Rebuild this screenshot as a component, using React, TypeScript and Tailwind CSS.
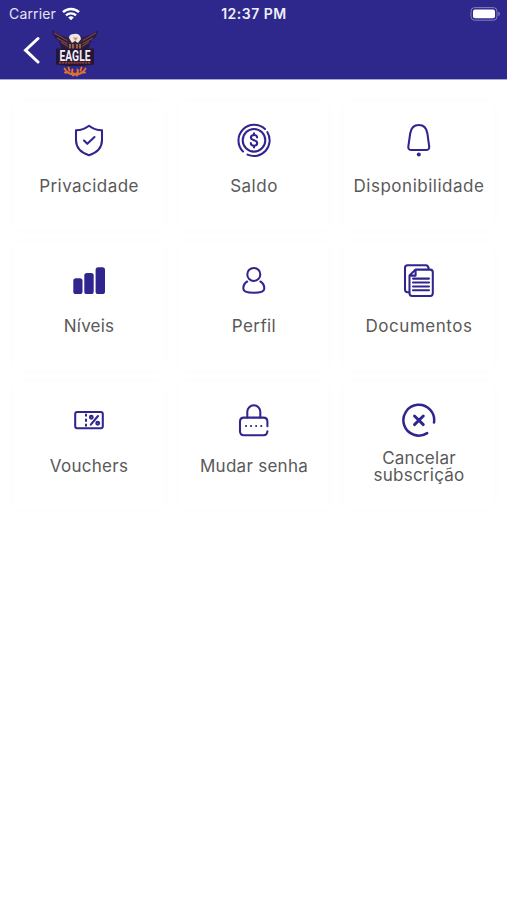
import type { ReactNode } from "react";

type MenuItem = {
  id: string;
  label: string;
  labelClass: string;
  icon: ReactNode;
};

const MENU_ITEMS: MenuItem[] = [
  {
    id: "privacy",
    label: "Privacidade",
    labelClass: "tracking-[0.45px]",
    icon: (
      <>
        <path d="M18 3.7Q12.5 8 5 8.3V18C5 26 11 31 18 33.2C25 31 31 26 31 18V8.3Q23.5 8 18 3.7Z" />
        <path d="M13 18.5L16.3 21.8L23.5 15" />
      </>
    ),
  },
  {
    id: "balance",
    label: "Saldo",
    labelClass: "tracking-[0.5px]",
    icon: (
      <>
        <circle cx="18" cy="18.3" r="11.3" />
        <path d="M7 29.5A15.7 15.7 0 0 1 29 7.1" />
        <path d="M31.4 10.2A15.7 15.7 0 0 1 11.5 32.6" />
        <path d="M21.1 15.4C21.1 13.7 19.8 12.9 18 12.9S14.9 13.9 14.9 15.5C14.9 19 21.2 17.5 21.2 21C21.2 22.7 19.8 23.7 18 23.7S14.8 22.8 14.8 21.1M18 11.2V12.9M18 23.7V25.4" />
      </>
    ),
  },
  {
    id: "availability",
    label: "Disponibilidade",
    labelClass: "tracking-[0.52px]",
    icon: (
      <>
        <path d="M7.3 24.6L9.2 11.5C10 6 13.5 3 17.8 3S25.6 6 26.4 11.5L28.2 24.6Q28.5 28 25 28H10.5Q7 28 7.3 24.6Z" />
        <circle cx="17.8" cy="32.6" r="2" fill="currentColor" stroke="none" />
      </>
    ),
  },
  {
    id: "levels",
    label: "Níveis",
    labelClass: "tracking-[0.2px]",
    icon: (
      <g fill="currentColor" stroke="none">
        <rect x="2.3" y="16.3" width="9.2" height="15.7" rx="2.6" />
        <rect x="13.3" y="11" width="9.4" height="21" rx="2.6" />
        <rect x="24.6" y="5.3" width="9.4" height="26.7" rx="2.6" />
      </g>
    ),
  },
  {
    id: "profile",
    label: "Perfil",
    labelClass: "tracking-[0.4px]",
    icon: (
      <>
        <circle cx="17.8" cy="12.4" r="6.5" />
        <path d="M11.2 19.5C8.5 21 7.3 24 7.3 26.5C7.3 29.5 12 30.8 17.8 30.8S28.3 29.5 28.3 26.5C28.3 24 27 21 24.4 19.5" />
      </>
    ),
  },
  {
    id: "documents",
    label: "Documentos",
    labelClass: "tracking-[0.52px]",
    icon: (
      <>
        <path d="M8.3 30.2H6.6Q4 30.2 4 27.6V5.8Q4 3.2 6.6 3.2H24.8Q27.4 3.2 27.7 6.8" />
        <path d="M14.6 7.6H29.2Q31.8 7.6 31.8 10.2V31.3Q31.8 33.9 29.2 33.9H11.1Q8.5 33.9 8.5 31.3V13.6L14.6 7.6V13.6H8.5" />
        <path d="M12 16.6H28M12 20.5H28M12 24.4H28M12 28.3H28" />
      </>
    ),
  },
  {
    id: "vouchers",
    label: "Vouchers",
    labelClass: "tracking-[0.28px]",
    icon: (
      <>
        <rect x="4.2" y="10" width="27.6" height="16.2" rx="2" />
        <path d="M15 12.5V13.8M15 17.4V19M15 22.4V23.8M27 14L19.8 22.6" />
        <circle cx="20.3" cy="15.2" r="1.4" />
        <circle cx="26.7" cy="21.2" r="1.4" />
      </>
    ),
  },
  {
    id: "password",
    label: "Mudar senha",
    labelClass: "tracking-[0.28px]",
    icon: (
      <>
        <path d="M11.3 15.6V9.8A6.5 6.5 0 0 1 24.3 9.8V15.6" />
        <path d="M31.4 24.2V19.6Q31.4 15.6 27.4 15.6H8Q4 15.6 4 19.6V29.2Q4 33.2 8 33.2H27.4Q31.2 33.2 31.4 29.2" />
        <path d="M10 24H10.1M15 24H15.1M20.1 24H20.2M25.2 24H25.3" />
      </>
    ),
  },
  {
    id: "cancel",
    label: "Cancelar subscrição",
    labelClass: "w-[110px] tracking-[0.25px]",
    icon: (
      <>
        <path d="M33 20.6A15.4 15.4 0 1 0 26.2 31.1" strokeWidth="2.5" />
        <path d="M13.5 14L22.3 22.6M22.3 14L13.5 22.6" strokeWidth="2.9" />
      </>
    ),
  },
];

function EagleLogo() {
  return (
    <svg viewBox="0 0 48 48" className="h-12 w-12" aria-label="Eagle">
      <path d="M1 1C5 5 11 7 18 9L22 20H11C8 17 11 15 7 13L9 12C4 10 2 7 1 1Z" fill="#2a1a3c" />
      <path d="M47 1C43 5 37 7 30 9L26 20H37C40 17 37 15 41 13L39 12C44 10 46 7 47 1Z" fill="#2a1a3c" />
      <path
        d="M3 4L17 12M6 9L17 15M10 13L18 18M45 4L31 12M42 9L31 15M38 13L30 18"
        stroke="#7d4441"
        strokeWidth="1.2"
      />
      <path d="M16 9L24 5L32 9L31 20H17Z" fill="#352239" />
      <path d="M18 9Q18 5 23 5Q29 4 30 10L27 14L24 12L21 14Z" fill="#e9e6ed" />
      <path d="M22 8.5H27L24.5 12Z" fill="#e38b32" />
      <path d="M19 15V21M22 15V21M26 15V21M29 15V21" stroke="#a97843" strokeWidth="1.6" />
      <path d="M5 19.5H43V35.5L31 37H17L5 35.5Z" fill="#251637" />
      <text
        x="24"
        y="31.5"
        textAnchor="middle"
        textLength="31"
        lengthAdjust="spacingAndGlyphs"
        fill="#f4eff5"
        className="font-['Roboto',sans-serif] text-[15px] font-bold"
      >
        EAGLE
      </text>
      <path d="M8 33.8H40" stroke="#8c3d35" strokeWidth="2" strokeDasharray="2.2 0.7" />
      <g fill="none" stroke="#e0702f" strokeLinecap="round">
        <path d="M13.5 39.5Q16 44.5 22 45.5M34.5 39.5Q32 44.5 26 45.5" strokeWidth="1.8" />
        <path
          d="M17.5 38.5L18.5 41.5M21.5 40.5L21 43.5M14 43.5L17.5 43.5M30.5 38.5L29.5 41.5M26.5 40.5L27 43.5M34 43.5L30.5 43.5M22 46.5L26 44M26 46.5L22 44"
          strokeWidth="2"
        />
      </g>
    </svg>
  );
}

function StatusBar() {
  return (
    <div className="grid h-[27px] grid-cols-3 items-center pl-[9px] pr-[7px] text-white">
      <div className="flex items-center gap-[6px]">
        <span className="text-[14px] leading-none tracking-[0.15px] text-[#e5e3f3]">Carrier</span>
        <svg viewBox="0 0 18 14" className="h-[14px] w-[18px]" fill="none" stroke="currentColor">
          <path d="M1 5.2A11.5 11.5 0 0 1 17 5.2" strokeWidth="2.5" />
          <path d="M4 8.4A7.2 7.2 0 0 1 14 8.4" strokeWidth="2.3" />
          <path d="M9 13.2L6.2 10.5A4.1 4.1 0 0 1 11.8 10.5Z" fill="currentColor" stroke="none" />
        </svg>
      </div>
      <span className="-ml-px text-center text-[14px] font-semibold leading-none tracking-[0.5px] text-[#f0eff9]">
        12:37 PM
      </span>
      <svg viewBox="0 0 30 14" className="h-[14px] w-[30px] justify-self-end">
        <rect x="1" y="0.6" width="26" height="12.6" rx="3.6" fill="none" stroke="#8581bd" />
        <rect x="3" y="2.5" width="22" height="8.8" rx="2" fill="white" />
        <path d="M28.3 4.8Q30 5.4 30 7T28.3 9Z" fill="#8581bd" />
      </svg>
    </div>
  );
}

function MenuCard({ item }: { item: MenuItem }) {
  return (
    <button
      type="button"
      className="flex h-32 flex-col items-center rounded-md bg-white pt-5 shadow-[0_0_8px_rgba(0,0,0,0.02)]"
    >
      <svg
        viewBox="0 0 36 36"
        className="h-9 w-9 shrink-0 text-[#30258f]"
        fill="none"
        stroke="currentColor"
        strokeWidth="2.05"
        strokeLinecap="round"
        strokeLinejoin="round"
      >
        {item.icon}
      </svg>
      <span
        className="mt-[11px] flex h-9 items-center text-center text-[17px] leading-[17.5px] text-[#595959]"
      >
        <span className={item.labelClass}>{item.label}</span>
      </span>
    </button>
  );
}

export default function App() {
  return (
    <div className="min-h-[900px] w-full bg-white font-['Inter','Liberation_Sans',sans-serif]">
      <header className="h-20 border-b border-[#aaa7d3] bg-[#2f288c]">
        <StatusBar />
        <div className="flex h-[52px] items-center pl-[23px]">
          <button type="button" aria-label="Voltar" className="mb-[7px] text-white">
            <svg
              viewBox="0 0 18 28"
              className="h-7 w-[18px]"
              fill="none"
              stroke="currentColor"
              strokeWidth="3"
              strokeLinecap="round"
            >
              <path d="M15 2.5L2.5 14.2L15 26" />
            </svg>
          </button>
          <div className="ml-[10px]">
            <EagleLogo />
          </div>
        </div>
      </header>

      <main className="grid grid-cols-[repeat(3,150px)] gap-x-[15px] gap-y-3 pl-[14px] pt-[22px]">
        {MENU_ITEMS.map((item) => (
          <MenuCard key={item.id} item={item} />
        ))}
      </main>
    </div>
  );
}
